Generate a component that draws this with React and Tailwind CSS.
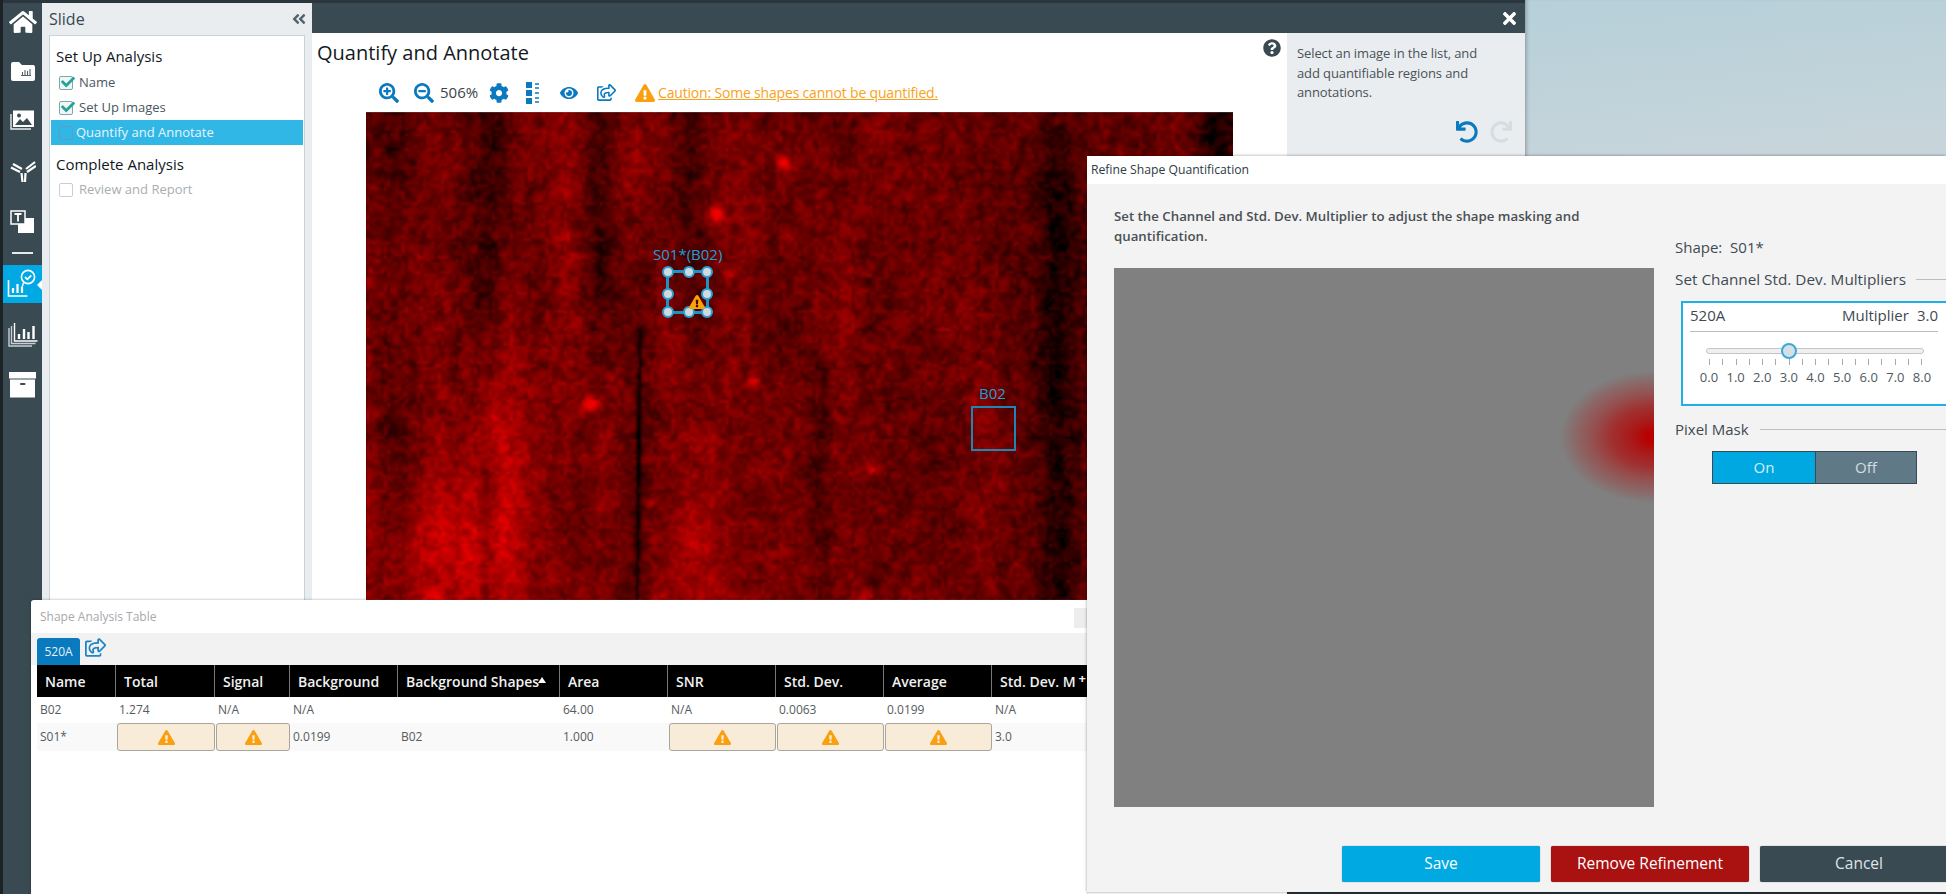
import React from "react";
import {
  FaHome, FaSearchPlus, FaSearchMinus, FaCog, FaEye, FaRegShareSquare, FaExclamationTriangle,
  FaQuestionCircle, FaUndo, FaRedo, FaTimes, FaAngleDoubleLeft, FaCheck,
} from "react-icons/fa";

const hash = (x, y) => {
  const s = Math.sin(x * 127.1 + y * 311.7) * 43758.5453;
  return s - Math.floor(s);
};

const valueNoise = (x, y) => {
  const ix = Math.floor(x), iy = Math.floor(y);
  const fx = x - ix, fy = y - iy;
  const sx = fx * fx * (3 - 2 * fx), sy = fy * fy * (3 - 2 * fy);
  const a = hash(ix, iy), b = hash(ix + 1, iy), c = hash(ix, iy + 1), d = hash(ix + 1, iy + 1);
  return a + (b - a) * sx + (c - a) * sy + (a - b - c + d) * sx * sy;
};

const gauss = (d, w) => Math.exp(-(d * d) / (2 * w * w));

// vertical streaks of the scan: x, width, amount, y from, y to
const bands = [
  [20, 12, -0.1, 0, 488], [124, 12, -0.2, 0, 170], [231, 12, -0.24, 0, 150], [320, 12, -0.2, 0, 130],
  [690, 12, -0.16, 0, 488], [698, 22, -0.14, 0, 488], [850, 14, -0.34, 0, 488], [120, 7, -0.2, 380, 488],
  [210, 26, 0.06, 0, 488], [455, 7, -0.12, 280, 488],
];
const blobs = [
  [134, 410, 34, 100, 0.32], [54, 445, 50, 60, 0.26], [325, 450, 28, 70, 0.22], [264, 40, 16, 70, 0.15],
  [190, 290, 50, 50, 0.06], [420, 90, 40, 70, 0.07],
];
const spots = [
  [418, 50, 5.5, 0.7], [350, 101, 5.5, 0.7], [222, 291, 5, 0.65], [387, 270, 4.5, 0.5], [504, 357, 3.5, 0.5],
  [283, 390, 4, 0.35], [497, 483, 5, 0.5], [690, 8, 3.5, 0.4], [198, 123, 3.5, 0.3], [64, 483, 6, 0.4],
  [362, 160, 3.5, 0.3], [290, 483, 5, 0.3],
];

const buildScan = () => {
  const size = 3, buckets = {};
  for (let y = 0; y < 488; y += size) {
    for (let x = 0; x < 868; x += size) {
      let v = 0.45;
      v += (valueNoise(x / 3.6, y / 3.6) - 0.5) * 0.34;
      v += (valueNoise(x / 9, y / 12 + 40) - 0.5) * 0.2;
      v += (valueNoise(x / 34 + 9, y / 180) - 0.5) * 0.2;
      for (const [bx, w, amt, y0, y1] of bands) {
        const fade = y < y0 ? gauss(y - y0, 40) : y > y1 ? gauss(y - y1, 50) : 1;
        v += gauss(x - bx, w) * amt * fade;
      }
      for (const [bx, by, rx, ry, amt] of blobs) v += Math.exp(-((x - bx) ** 2) / (2 * rx * rx) - ((y - by) ** 2) / (2 * ry * ry)) * amt;
      for (const [bx, by, r, amt] of spots) v += gauss(Math.hypot(x - bx, y - by), r) * amt;
      if (y > 213) v -= gauss(x - (273 - (y - 213) * 0.012), 1.5) * 0.6;
      const k = Math.max(0, Math.min(31, Math.round(v * 31)));
      (buckets[k] = buckets[k] || []).push(`M${x} ${y}h${size}v${size}h-${size}z`);
    }
  }
  return Object.entries(buckets).map(([k, d]) => ({ fill: `rgb(${Math.round((k / 31) * 240)},0,0)`, d: d.join("") }));
};

const scan = buildScan();

const ScanImage = () => (
  <svg viewBox="0 0 868 488" className="block w-[867px] h-[488px]">
    <defs>
      <filter id="soft" x="-2%" y="-2%" width="104%" height="104%">
        <feGaussianBlur stdDeviation="1.1" />
      </filter>
    </defs>
    <rect width="868" height="488" fill="#3a0000" />
    <g filter="url(#soft)">
      {scan.map((b) => (
        <path key={b.fill} d={b.d} fill={b.fill} />
      ))}
    </g>
  </svg>
);

const NavFolder = () => (
  <svg width="24" height="19" viewBox="0 0 24 19" className="mt-[26px]">
    <path d="M0 2a2 2 0 0 1 2-2h6l3 3h11a2 2 0 0 1 2 2v12a2 2 0 0 1-2 2H2a2 2 0 0 1-2-2z" fill="#fff" />
    <path d="M10 13.5h10M11.5 13V10M14 13V8M16.5 13V9M19 13V7" stroke="#50626b" strokeWidth="1.1" fill="none" />
  </svg>
);

const NavPictures = () => (
  <svg width="25" height="20" viewBox="0 0 25 20" className="mt-[29px]">
    <path d="M1 4v15h20" stroke="#e8ecee" strokeWidth="1.4" fill="none" />
    <rect x="3.5" y="1" width="20" height="15.5" fill="#fff" stroke="#fff" />
    <path d="M5 15l5-6 3 3 4-4 5 7z" fill="#3a4a52" />
    <circle cx="9" cy="5.5" r="2" fill="#3a4a52" />
  </svg>
);

const NavAntibody = () => (
  <svg width="26" height="24" viewBox="0 0 26 24" className="mt-[29px]">
    <g stroke="#fff" strokeWidth="2.2" fill="none">
      <path d="M1 8.5l9 4.5M3 5l9 5M25 3l-9 7M26 7l-9 6" />
      <path d="M11.5 14l1 9M15.5 14l-.5 9" />
    </g>
  </svg>
);

const NavText = () => (
  <svg width="25" height="24" viewBox="0 0 25 24" className="mt-[27px]">
    <rect x="8" y="8" width="16" height="15" fill="#fff" />
    <rect x="1" y="1" width="14" height="13" fill="#3a4a52" stroke="#fff" strokeWidth="1.5" />
    <path d="M4.5 4h7M8 4v7.5" stroke="#fff" strokeWidth="1.8" fill="none" />
  </svg>
);

const NavAnalysis = () => (
  <div className="relative mt-[11px] flex h-[38px] w-[39px] items-center justify-center bg-[#00a9e3]">
    <svg width="32" height="30" viewBox="0 0 32 30">
      <path d="M1.5 11v16h19" stroke="#fff" strokeWidth="1.6" fill="none" />
      <path d="M6 24v-5M10.5 24v-9M15 24v-6" stroke="#fff" strokeWidth="2.2" fill="none" />
      <circle cx="21" cy="8" r="6.6" stroke="#fff" strokeWidth="1.6" fill="none" />
      <path d="M18 8l2.3 2.3 4-4" stroke="#fff" strokeWidth="1.8" fill="none" />
      <path d="M16.5 14l-1.5 4" stroke="#fff" strokeWidth="1.4" />
    </svg>
    <span className="absolute right-0 top-[15px] h-0 w-0 border-y-[5px] border-r-[5px] border-y-transparent border-r-white" />
  </div>
);

const NavStacked = () => (
  <svg width="30" height="25" viewBox="0 0 30 25" className="mt-[19px]">
    <path d="M1 6v18h23M3.5 4v17.5h24" stroke="#c8d0d4" strokeWidth="1.4" fill="none" />
    <path d="M6.5 1v18h23" stroke="#fff" strokeWidth="1.4" fill="none" />
    <path d="M11 17v-5M16 17V7M20.5 17v-7M25.5 17V4" stroke="#fff" strokeWidth="2.4" fill="none" />
  </svg>
);

const NavBox = () => (
  <svg width="27" height="26" viewBox="0 0 27 26" className="mt-[25px]">
    <rect y="0" width="27" height="6.5" fill="#fff" />
    <rect x="1" y="7.5" width="25" height="18" fill="#fff" />
    <rect x="11" y="11" width="5.5" height="2" rx="1" fill="#3a4a52" />
  </svg>
);

const Step = ({ label, state }) => {
  const done = state === "done";
  const active = state === "active";
  const off = state === "off";
  return (
    <div className={`flex h-[25px] items-center pl-[8px] text-[13px] ${active ? "bg-[#31b7e6] text-[#e6f6fc]" : off ? "text-[#a9aeb2]" : "text-[#4b5661]"}`}>
      <span className={`relative h-[14px] w-[14px] rounded-[2px] border ${active ? "mr-[3px] border-[#5f9fbd]" : "mr-[6px]"} ${done ? "border-[#78aaa6] bg-[#f1f6f6]" : ""} ${off ? "border-[#c9cdd0]" : ""}`}>
        {done && <FaCheck className="absolute left-[1px] top-[-2px] text-[14px] text-[#29a395]" />}
      </span>
      {label}
    </div>
  );
};

const Warn = () => (
  <div className="flex h-full w-full items-center justify-center rounded-[3px] border border-[#a8a59d] bg-[#f8ecd9]">
    <FaExclamationTriangle className="text-[17px] text-[#fa9f0f]" />
  </div>
);

const columns = [
  { name: "Name", w: "w-[79px]" },
  { name: "Total", w: "w-[99px]" },
  { name: "Signal", w: "w-[75px]" },
  { name: "Background", w: "w-[108px]" },
  { name: "Background Shapes", w: "w-[162px]" },
  { name: "Area", w: "w-[108px]" },
  { name: "SNR", w: "w-[108px]" },
  { name: "Std. Dev.", w: "w-[108px]" },
  { name: "Average", w: "w-[108px]" },
  { name: "Std. Dev. M", w: "flex-1" },
];

const rows = [
  { cells: ["B02", "1.274", "N/A", "N/A", "", "64.00", "N/A", "0.0063", "0.0199", "N/A"], bg: "bg-white", h: "h-[26px]" },
  { cells: ["S01*", "!", "!", "0.0199", "B02", "1.000", "!", "!", "!", "3.0"], bg: "bg-[#f9f9f9]", h: "h-[28px]" },
];

const ShapeTable = () => (
  <div className="absolute left-[31px] top-[600px] h-[294px] w-[1056px] rounded-tl-[3px] bg-white shadow-[0_0_3px_rgba(0,0,0,0.35)]">
    <div className="relative flex h-[33px] items-center pl-[9px] text-[12px] text-[#a6a9ac]">
      Shape Analysis Table
      <span className="absolute right-0 top-[8px] h-[20px] w-[13px] bg-[#ededed]" />
    </div>
    <div className="flex h-[32px] items-end bg-[#f2f2f2] pl-[6px]">
      <div className="flex h-[27px] w-[43px] items-center justify-center rounded-t-[3px] bg-[#0a7abf] text-[12px] text-[#e4f0f8]">520A</div>
      <FaRegShareSquare className="mb-[7px] ml-[5px] text-[21px] text-[#1f83c4]" />
    </div>
    <div className="ml-[6px] flex h-[32px] bg-black text-[14px] font-semibold text-[#f1f1f1]">
      {columns.map((c, i) => (
        <div key={c.name} className={`${c.w} relative flex items-center overflow-hidden whitespace-nowrap border-r border-[#777] pl-[8px] last:border-r-0`}>
          {c.name}
          {i === 4 && <span className="absolute left-[140px] top-[12px] h-0 w-0 border-x-[4px] border-b-[6px] border-x-transparent border-b-white" />}
          {i === 9 && <span className="absolute right-[1px] top-[5px] text-[13px] font-bold leading-[17px]">+</span>}
        </div>
      ))}
    </div>
    {rows.map((r) => (
      <div key={r.cells[0]} className={`ml-[6px] flex ${r.h} ${r.bg} text-[12px] text-[#555b60]`}>
        {r.cells.map((cell, i) => (
          <div key={i} className={`${columns[i].w} flex items-center ${cell === "!" ? "pl-[1px]" : "pl-[3px]"}`}>
            {cell === "!" ? <Warn /> : cell}
          </div>
        ))}
      </div>
    ))}
  </div>
);

const sliderTicks = Array.from({ length: 17 });
const sliderLabels = ["0.0", "1.0", "2.0", "3.0", "4.0", "5.0", "6.0", "7.0", "8.0"];

const RefineDialog = () => (
  <div className="absolute left-[1087px] top-[156px] flex h-[736px] w-[859px] flex-col bg-[#f3f3f3] shadow-[0_0_3px_rgba(0,0,0,0.4)]">
    <div className="flex h-[28px] items-center bg-white pl-[4px] text-[12.2px] text-[#2d3a45]">Refine Shape Quantification</div>
    <div className="flex flex-1">
      <div className="w-[567px] pl-[27px]">
        <p className="w-[480px] pt-[22px] text-[13.25px] font-semibold leading-[20px] text-[#4a4f54]">
          Set the Channel and Std. Dev. Multiplier to adjust the shape masking and quantification.
        </p>
        <div className="mt-[22px] h-[539px] w-[540px] bg-[#808080] bg-[radial-gradient(ellipse_94px_66px_at_100%_169px,#b80000_0%,#b80000_8%,#a91a1a_25%,#a03030_45%,#955050_65%,#8a6a6a_85%,#808080_100%)]" />
      </div>
      <div className="flex-1 pl-[21px] pt-[54px] text-[15px] text-[#3f4a52]">
        <div className="leading-[19px]">Shape:&nbsp; S01*</div>
        <div className="mt-[13px] flex items-center leading-[19px]">
          <span className="text-[15.3px]">Set Channel Std. Dev. Multipliers</span>
          <span className="ml-[10px] h-px flex-1 bg-[#bdbdbd]" />
        </div>
        <div className="mt-[12px] ml-[6px] h-[105px] border-2 border-r-0 border-[#1fb0e6] bg-white">
          <div className="mx-[7px] flex h-[29px] w-[248px] items-center justify-between border-b border-[#bcbcbc] pb-[3px]">
            <span>520A</span>
            <span className="flex gap-[8px]"><span>Multiplier</span><span>3.0</span></span>
          </div>
          <div className="relative ml-[23px] mt-[16px] h-[6px] w-[218px] rounded-full border border-[#c2c6c8] bg-[#f0f0f0]">
            <span className="absolute left-[74px] top-[-6px] h-[16px] w-[16px] rounded-full border-2 border-[#37aadb] bg-[#d6dfe4]" />
          </div>
          <div className="ml-[26px] mt-[5px] flex w-[213px] justify-between">
            {sliderTicks.map((_, i) => (
              <span key={i} className="h-[6px] w-px bg-[#a9a9a9]" />
            ))}
          </div>
          <div className="ml-[16px] mt-[4px] flex w-[233px] justify-between text-[13px] leading-[16px] text-[#50585e]">
            {sliderLabels.map((l) => (
              <span key={l} className="w-[20px] text-center">{l}</span>
            ))}
          </div>
        </div>
        <div className="mt-[14px] flex items-center leading-[19px]">
          <span>Pixel Mask</span>
          <span className="ml-[11px] h-px flex-1 bg-[#bdbdbd]" />
        </div>
        <div className="ml-[37px] mt-[12px] flex h-[33px] w-[205px] border border-[#3a4a52] text-[#d9eef7]">
          <div className="flex w-[102px] items-center justify-center bg-[#00a8e1]">On</div>
          <div className="flex flex-1 items-center justify-center border-l border-[#3a4a52] bg-[#5f7987] text-[#d5dde1]">Off</div>
        </div>
      </div>
    </div>
    <div className="flex h-[46px] gap-[11px] pl-[255px] text-[15.5px] text-white">
      <button className="h-[36px] w-[198px] shrink-0 rounded-[2px] bg-[#00a9e2] shadow-[0_0_1px_#555]">Save</button>
      <button className="h-[36px] w-[198px] shrink-0 rounded-[2px] bg-[#aa1111] shadow-[0_0_1px_#555]">Remove Refinement</button>
      <button className="h-[36px] w-[198px] shrink-0 rounded-[2px] bg-[#3a4a52] text-[#dfe5e8] shadow-[0_0_1px_#555]">Cancel</button>
    </div>
  </div>
);

const ToolIcon = ({ children, className }) => <span className={`flex items-center text-[#0a79bf] ${className}`}>{children}</span>;

const Handle = ({ className }) => (
  <span className={`absolute h-[12px] w-[12px] rounded-full border-2 border-[#2a9fd0] bg-[#cfd9df] ${className}`} />
);

export default function App() {
  return (
    <div className="relative flex h-[894px] w-[1946px] overflow-hidden bg-[#283137] font-['Open_Sans',sans-serif]">
      <div className="w-[3px] bg-[#1d2226]" />
      <div className="flex w-[1522px] flex-col">
        <div className="h-[3px] bg-[#2a363c]" />
        <div className="flex flex-1">
          <aside className="flex w-[39px] flex-col items-center bg-[#3a4a52]">
            <FaHome className="mt-[5px] text-[28px] text-white" />
            <NavFolder />
            <NavPictures />
            <NavAntibody />
            <NavText />
            <span className="mt-[18px] h-[2px] w-[21px] bg-[#e6eaec]" />
            <NavAnalysis />
            <NavStacked />
            <NavBox />
          </aside>
          <section className="flex w-[270px] flex-col bg-[#e9edf0] px-[7px]">
            <div className="flex h-[32px] items-center justify-between text-[16px] text-[#3a4650]">
              <span>Slide</span>
              <FaAngleDoubleLeft className="mr-[-2px] text-[16px] text-[#55636c]" />
            </div>
            <div className="flex-1 border border-[#c9d2d7] bg-white px-[1px] pt-[6px]">
              <div className="h-[28px] pl-[5px] text-[15px] leading-[28px] text-[#11181d]">Set Up Analysis</div>
              <Step label="Name" state="done" />
              <Step label="Set Up Images" state="done" />
              <Step label="Quantify and Annotate" state="active" />
              <div className="mt-[5px] h-[28px] pl-[5px] text-[15px] leading-[28px] text-[#11181d]">Complete Analysis</div>
              <div className="mt-[-1px]">
                <Step label="Review and Report" state="off" />
              </div>
            </div>
          </section>
          <main className="flex flex-1 flex-col">
            <div className="flex h-[30px] items-center justify-end bg-[#3a4a52] pr-[6px]">
              <FaTimes className="text-[19px] text-white" />
            </div>
            <div className="flex flex-1">
              <div className="w-[975px] bg-white">
                <div className="relative flex h-[40px] items-center pl-[5px] text-[20px] font-medium text-[#14191d]">
                  Quantify and Annotate
                  <FaQuestionCircle className="absolute right-[6px] top-[6px] text-[18px] text-[#3a4a52]" />
                </div>
                <div className="ml-[67px] flex h-[39px] items-center text-[15px]">
                  <ToolIcon><FaSearchPlus className="text-[20px]" /></ToolIcon>
                  <ToolIcon className="ml-[15px]"><FaSearchMinus className="text-[20px]" /></ToolIcon>
                  <span className="ml-[6px] w-[49px] text-[#3c454c]">506%</span>
                  <ToolIcon><FaCog className="text-[20px]" /></ToolIcon>
                  <ToolIcon className="ml-[17px]">
                    <svg width="14" height="22" viewBox="0 0 14 22">
                      <path d="M0 0h6v6H0zM0 8h6v6H0zM0 16h6v6H0z" fill="#0a79bf" />
                      <path d="M9 2h4M9 6h4M9 11h4M9 16h4M9 20h4" stroke="#0a79bf" strokeWidth="1.4" />
                    </svg>
                  </ToolIcon>
                  <ToolIcon className="ml-[20px]"><FaEye className="text-[18px]" /></ToolIcon>
                  <ToolIcon className="ml-[19px]"><FaRegShareSquare className="text-[19px]" /></ToolIcon>
                  <FaExclamationTriangle className="ml-[19px] text-[20px] text-[#fa9f0f]" />
                  <span className="ml-[3px] text-[14px] tracking-[-0.18px] text-[#f9a11b] underline">Caution: Some shapes cannot be quantified.</span>
                </div>
                <div className="relative ml-[54px] w-[867px]">
                  <ScanImage />
                  <span className="absolute left-[287px] top-[134px] whitespace-nowrap text-[15px] leading-[16px] text-[#1e9fd4]">S01*(B02)</span>
                  <div className="absolute left-[300px] top-[158px] h-[44px] w-[43px] border-[3px] border-[#1c93c4]">
                    <Handle className="left-[-7px] top-[-7px]" />
                    <Handle className="left-[14px] top-[-7px]" />
                    <Handle className="right-[-7px] top-[-7px]" />
                    <Handle className="left-[-7px] top-[15px]" />
                    <Handle className="right-[-7px] top-[15px]" />
                    <Handle className="bottom-[-7px] left-[-7px]" />
                    <Handle className="bottom-[-7px] left-[14px]" />
                    <Handle className="bottom-[-7px] right-[-7px]" />
                    <FaExclamationTriangle className="absolute bottom-[1px] right-[1px] text-[16px] text-[#f7a30a]" />
                  </div>
                  <span className="absolute left-[613px] top-[273px] text-[15px] leading-[16px] text-[#1e9fd4]">B02</span>
                  <div className="absolute left-[605px] top-[294px] h-[45px] w-[45px] border-2 border-[#1c86b4]" />
                </div>
              </div>
              <div className="h-[123px] flex-1 bg-[#e9edf0] pl-[10px] pt-[11px]">
                <p className="w-[195px] text-[13px] leading-[19.5px] tracking-[-0.1px] text-[#4a5158]">
                  Select an image in the list, and add quantifiable regions and annotations.
                </p>
                <div className="mt-[18px] flex justify-end gap-[12px] pr-[13px]">
                  <FaUndo className="text-[22px] text-[#0a79bf]" />
                  <FaRedo className="text-[22px] text-[#d5dde1]" />
                </div>
              </div>
            </div>
          </main>
        </div>
      </div>
      <div className="h-[156px] flex-1 bg-[linear-gradient(175deg,#b6d0d9,#c9d5db)] shadow-[inset_4px_0_4px_-3px_rgba(0,0,0,0.3)]" />
      <ShapeTable />
      <RefineDialog />
    </div>
  );
}
